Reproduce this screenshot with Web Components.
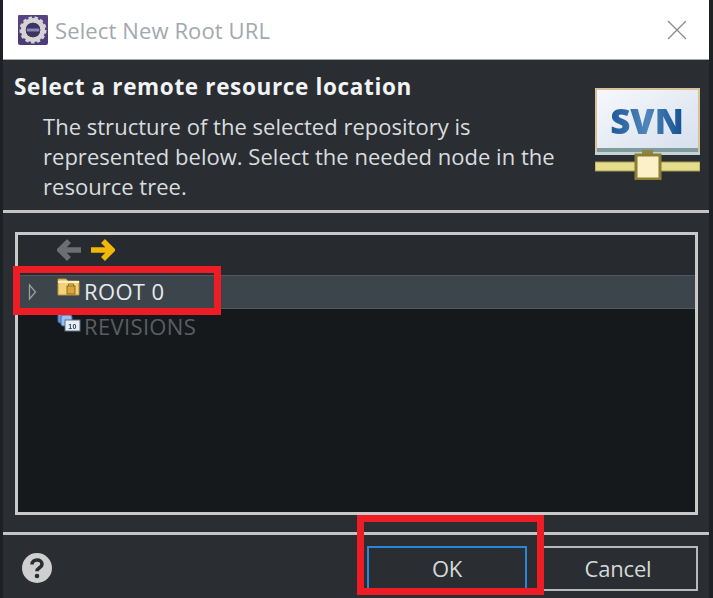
<!DOCTYPE html>
<html><head><meta charset="utf-8"><style>
html,body{margin:0;padding:0;background:#1d2024;width:713px;height:598px;overflow:hidden}
</style></head><body>
<svn-dialog>
  <dialog-title slot="title">Select New Root URL</dialog-title>
  <dialog-head slot="head" heading="Select a remote resource location">The structure of the selected repository is<br>represented below. Select the needed node in the<br>resource tree.</dialog-head>
  <tree-panel slot="tree">
    <tree-row selected><svg slot="icon" width="24" height="20" viewBox="0 0 24 20"><path d="M1 2h8l2 2h11v14H1z" fill="#f3d27a" stroke="#b98f3a"/><path d="M1 5h21" stroke="#fff1c0" stroke-width="2"/><rect x="10" y="9" width="8" height="8" fill="#d9a63a" stroke="#8f6c20"/><path d="M11.500 9V7h5v2" fill="none" stroke="#8f6c20"/></svg>ROOT 0</tree-row>
    <tree-row disabled><svg slot="icon" width="24" height="20" viewBox="0 0 24 20"><rect x="1" y="0" width="11" height="11" rx="2" fill="#6f9bd8" stroke="#3e6bab"/><rect x="4" y="3" width="11" height="11" rx="2" fill="#9dbfe9" stroke="#3e6bab"/><rect x="8" y="8" width="15" height="11" fill="#e9eef5" stroke="#5c6f8c"/><text x="15.500" y="16.500" font-family="Liberation Sans" font-size="7" font-weight="700" text-anchor="middle" fill="#27405f">10</text></svg>REVISIONS</tree-row>
  </tree-panel>
  <dialog-button slot="ok" default>OK</dialog-button>
  <dialog-button slot="cancel">Cancel</dialog-button>
</svn-dialog>
<script>
function def(name, html){
  customElements.define(name, class extends HTMLElement{
    constructor(){super();const r=this.attachShadow({mode:'open'});r.innerHTML=html;}
    connectedCallback(){
      const h=this.shadowRoot.querySelector('[data-heading]');
      if(h)h.textContent=this.getAttribute('heading')||'';
    }
  });
}
const FONT='"Open Sans","Noto Sans",sans-serif';
def('dialog-title',`<style>
:host{display:flex;align-items:center;height:60px;background:#fff;border-bottom:1px solid #a9a9a9;box-sizing:border-box;padding:0 22px 0 15px;font:22px/30px ${FONT};color:#a2a8ae;letter-spacing:.12px}
.t{flex:1;margin-left:7px}
svg{display:block}
svg.app{filter:blur(.5px)}
</style>
<svg class="app" width="30" height="30" viewBox="0 0 31 31"><rect width="31" height="31" rx="2" fill="#4d3a78"/><rect x="0" y="0" width="31" height="15" fill="#5f4a8c" opacity=".6"/><circle cx="15.500" cy="15.500" r="10" fill="none" stroke="#d4d4d4" stroke-width="5"/><circle cx="15.500" cy="15.500" r="12.500" fill="none" stroke="#d4d4d4" stroke-width="3" stroke-dasharray="3.500 2.500"/><circle cx="15.500" cy="15.500" r="7.500" fill="#3c3560"/><rect x="9" y="14" width="13" height="3" fill="#8f85b8"/></svg>
<span class="t"><slot></slot></span>
<svg width="20" height="20" viewBox="0 0 20 20"><path d="M1 1l18 18M19 1L1 19" stroke="#8b8b8b" stroke-width="1.300" fill="none"/></svg>`);
def('dialog-head',`<style>
:host{display:flex;height:153px;box-sizing:border-box;padding:12px 0 0 11px;color:#e6e8ea;font:22px/30px ${FONT};border-bottom:3px solid #c4c4c4;letter-spacing:.02px}
.c{flex:1;min-width:0}
h1{margin:0;font:700 22.500px/30px ${FONT};color:#f2f3f4;letter-spacing:.65px}
p{margin:9px 0 0 29px;color:#d9dcdf;white-space:nowrap}
svg{flex:none;margin:16px 9px 0 0;display:block;filter:blur(.5px)}
</style>
<div class="c"><h1 data-heading></h1><p><slot></slot></p></div>
<svg width="105" height="92" viewBox="0 0 105 92">
<defs><linearGradient id="g" x1="0" y1="0" x2="1" y2="1"><stop offset="0" stop-color="#f7f8fb"/><stop offset="1" stop-color="#d5dfee"/></linearGradient><linearGradient id="b" x1="0" y1="0" x2="1" y2="0"><stop offset="0" stop-color="#1d5a98"/><stop offset=".5" stop-color="#4f86bb"/><stop offset="1" stop-color="#12508f"/></linearGradient></defs>
<rect x="1" y="1" width="103" height="63" fill="url(#g)" stroke="#d9c29a" stroke-width="2"/>
<rect x="2" y="60" width="101" height="5" fill="#7f9c9c"/><rect x="0" y="64" width="105" height="3" fill="#c6d2d6"/>
<text x="52" y="46" font-family="Open Sans,sans-serif" font-weight="800" font-size="35" text-anchor="middle" fill="url(#b)">SVN</text>
<rect x="47" y="62" width="11" height="7" fill="#8f8444"/>
<rect x="0" y="74" width="105" height="9" fill="#e5dc8e" stroke="#a39a4e"/>
<rect x="41" y="67" width="24" height="24" fill="#fbf0c8" stroke="#8c7f32" stroke-width="3"/></svg>`);
def('tree-panel',`<style>
:host{display:block;height:283px;box-sizing:border-box;background:#16191c;border:3px solid #c9c9c9;font:22px/30px ${FONT};color:#e0e2e4;letter-spacing:.35px}
.tb{display:flex;align-items:flex-start;gap:8px;height:40px;box-sizing:border-box;padding:4px 0 0 39px;background:#272b2f}
svg{display:block;filter:blur(.4px)}
</style>
<div class="tb">
<svg width="25" height="22" viewBox="0 0 25 22"><path d="M12 2L3 11l9 9M3 11h21" fill="none" stroke="#6b6e72" stroke-width="5.500"/></svg>
<svg width="25" height="22" viewBox="0 0 25 22"><path d="M13 2l9 9-9 9M22 11H1" fill="none" stroke="#f2b807" stroke-width="5.500"/></svg>
</div>
<slot></slot>`);
def('tree-row',`<style>
:host{display:flex;align-items:center;height:34px;box-sizing:border-box;padding:0 0 3px 39px;position:relative}
:host([selected]){background:#3d454c;border-top:1px solid #50585f;border-bottom:1px solid #50585f;color:#e8eaec}
:host([disabled]){color:#5a5e62;height:36px;padding-bottom:2px}
.tw{position:absolute;left:10px;top:6px;display:none}
:host([selected]) .tw{display:block}
.i{width:28px;height:26px;margin-right:-1px;display:block;transform:translateY(-5px);filter:blur(.4px)}
</style>
<svg class="tw" width="10" height="20" viewBox="0 0 10 20"><path d="M1.500 3l6 7-6 7z" fill="none" stroke="#9b9fa3" stroke-width="1.300"/></svg>
<span class="i"><slot name="icon"></slot></span><slot></slot>`);
def('dialog-button',`<style>
:host{display:flex;align-items:center;justify-content:center;width:160px;height:45px;box-sizing:border-box;border:2px solid #b9b9b9;background:#2a2e32;color:#d6d8da;font:22px/30px ${FONT};letter-spacing:-.2px}
:host([default]){border-color:#2a86d8}
</style><slot></slot>`);
def('svn-dialog',`<style>
:host{display:block;width:706px;height:598px;margin-left:3px;background:#2a2e32;position:relative;box-sizing:border-box}
.tree{padding:19px 11px 0 12px;height:322px;box-sizing:border-box;border-bottom:3px solid #c4c4c4}
.foot{display:flex;align-items:center;height:66px;padding:0 11px 0 19px;gap:11px;box-sizing:border-box}
.foot .sp{flex:1}
.help{width:30px;height:30px;display:block;filter:blur(.4px)}
.mark{position:absolute;box-sizing:border-box;border:7px solid #ee1c25;pointer-events:none}
</style>
<slot name="title"></slot><slot name="head"></slot>
<div class="tree"><slot name="tree"></slot></div>
<div class="foot">
<svg class="help" viewBox="0 0 30 30"><circle cx="15" cy="15" r="15" fill="#cfcfcf"/><path d="M10 11.500c0-3 2.300-4.500 5-4.500s5 1.500 5 4.200c0 3.800-5 3.300-5 7" fill="none" stroke="#2a2e32" stroke-width="3.600"/><circle cx="15" cy="23" r="2.300" fill="#2a2e32"/></svg>
<span class="sp"></span><slot name="ok"></slot><slot name="cancel"></slot>
</div>
<div class="mark" style="left:10px;top:266px;width:208px;height:49px"></div>
<div class="mark" style="left:354px;top:515px;width:187px;height:80px"></div>`);
</script>
</body></html>
